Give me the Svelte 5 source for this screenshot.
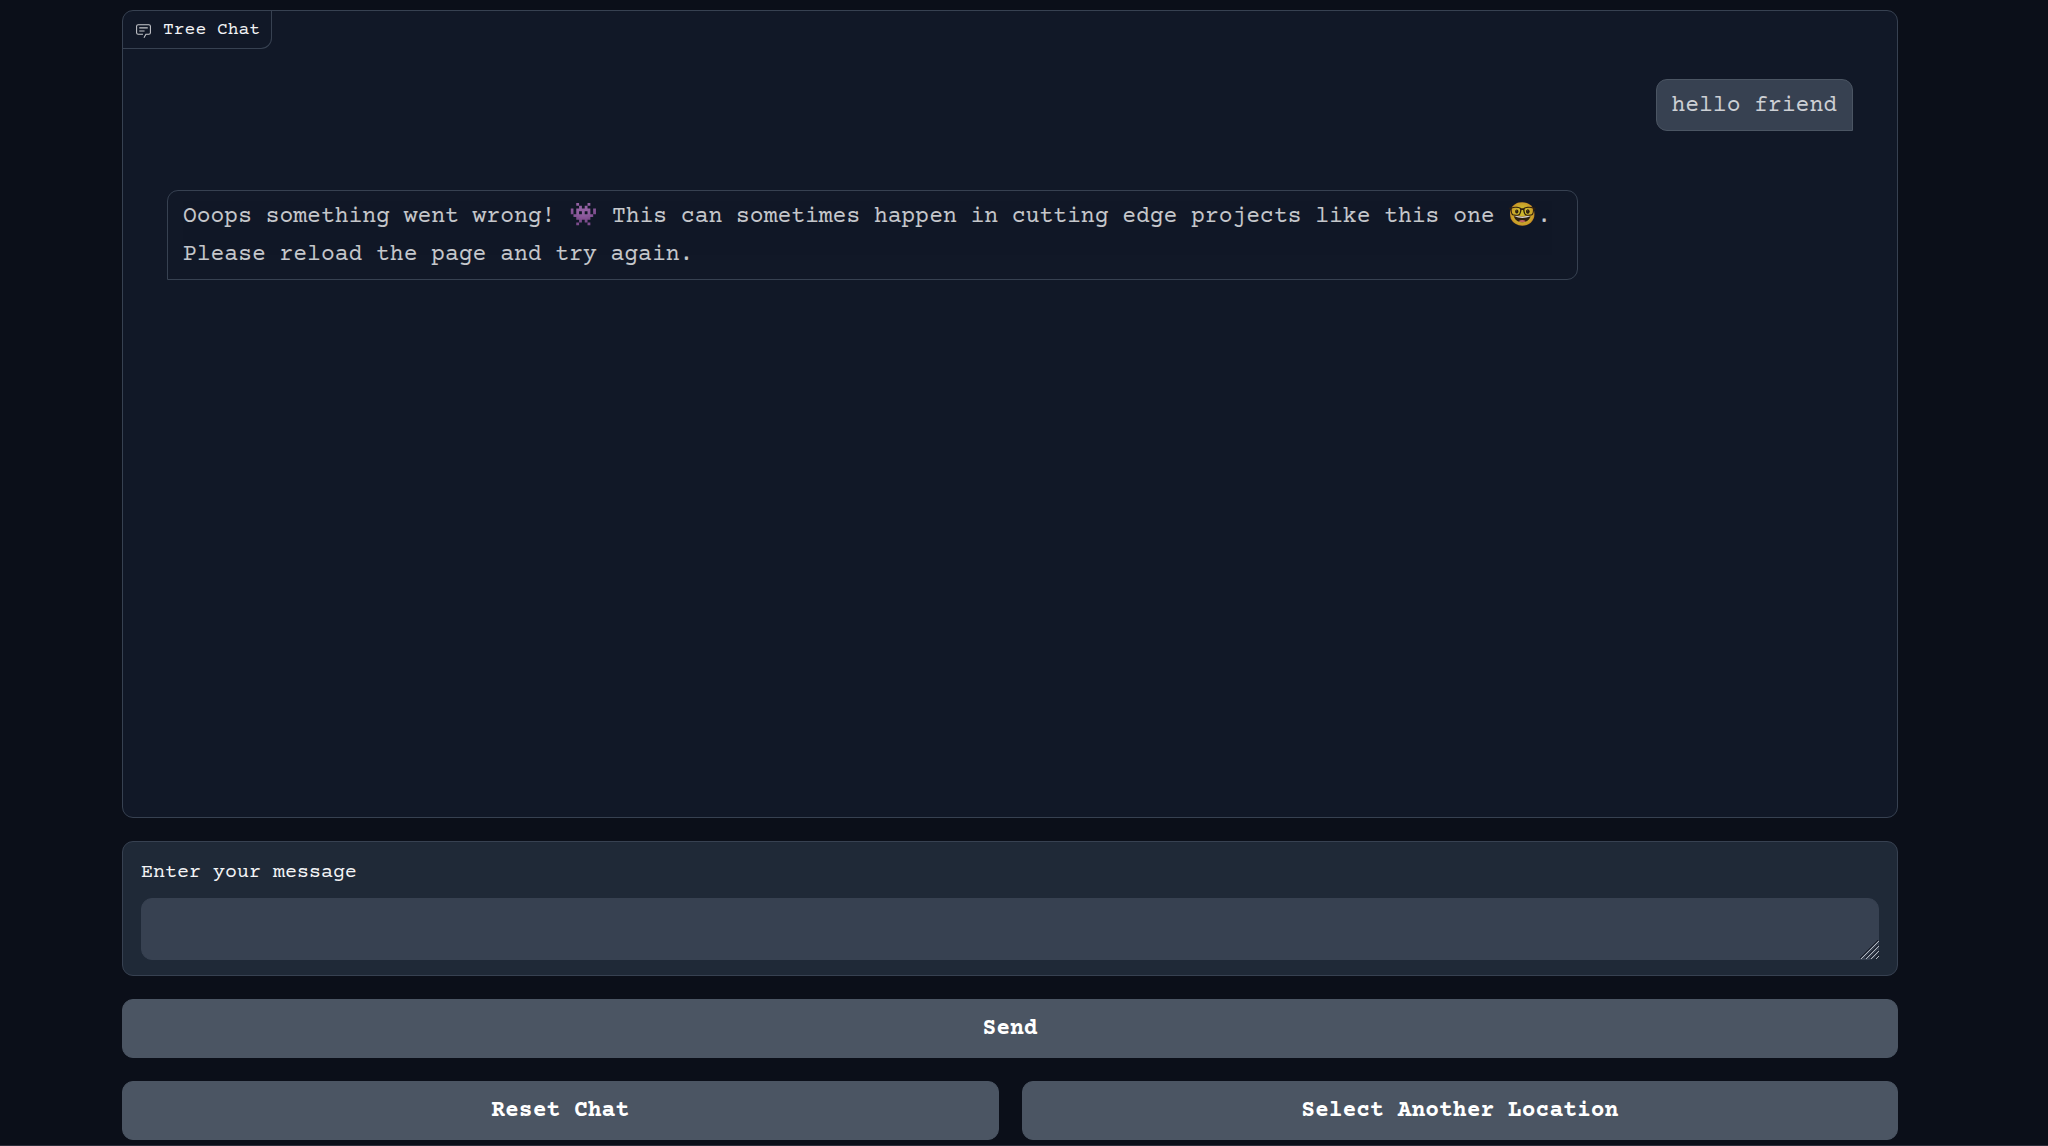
<script lang="ts">
  let message = '';
  let messages = [
    { role: 'user', text: 'hello friend' },
    {
      role: 'bot',
      text: 'Ooops something went wrong! 👾 This can sometimes happen in cutting edge projects like this one 🤓. Please reload the page and try again.'
    }
  ];

  function send() {
    if (!message.trim()) return;
    messages = [...messages, { role: 'user', text: message }];
    message = '';
  }

  function reset() {
    messages = [];
  }
</script>

<main class="page">
  <section class="chat" aria-label="Tree Chat">
    <div class="chat-label">
      <svg class="chat-icon" viewBox="0 0 32 32" aria-hidden="true">
        <path d="M17.74 30L16 29l4-7h6a2 2 0 0 0 2-2V8a2 2 0 0 0-2-2H6a2 2 0 0 0-2 2v12a2 2 0 0 0 2 2h9v2H6a4 4 0 0 1-4-4V8a4 4 0 0 1 4-4h20a4 4 0 0 1 4 4v12a4 4 0 0 1-4 4h-4.84Z" />
        <path d="M8 10h16v2H8zm0 6h10v2H8z" />
      </svg>
      <span>Tree Chat</span>
    </div>

    <div class="messages">
      {#each messages as item}
        <div class="message {item.role}"><span class="message-text">{item.text}</span></div>
      {/each}
    </div>
  </section>

  <div class="block">
    <label for="message">Enter your message</label>
    <div class="field">
      <textarea id="message" rows="1" bind:value={message}></textarea>
      <svg class="grip" viewBox="0 0 19 19" aria-hidden="true">
        <path class="grip-dark" d="M0 18L18 0M5 18L18 5M10 18L18 10M15 18L18 15" />
        <path class="grip-light" d="M1 19L19 1M6 19L19 6M11 19L19 11M16 19L19 16" />
      </svg>
    </div>
  </div>

  <button type="button" on:click={send}>Send</button>

  <div class="row">
    <button type="button" on:click={reset}>Reset Chat</button>
    <button type="button">Select Another Location</button>
  </div>
</main>

<style>
  :global(body) {
    margin: 0;
    background: #0b0f19;
  }

  .page {
    box-sizing: border-box;
    min-height: 100vh;
    padding: 10px 150px 5px 122px;
    display: flex;
    flex-direction: column;
    gap: 23px;
    border-bottom: 1px solid #2b2d3a;
    color: #f3f4f6;
    font-family: "Courier Prime", "Liberation Mono", monospace;
  }

  .chat {
    flex: 1;
    display: flex;
    flex-direction: column;
    align-items: flex-start;
    border: 1px solid #374151;
    border-radius: 11px;
    background: #111827;
    overflow: hidden;
  }

  .chat-label {
    display: flex;
    align-items: center;
    gap: 11px;
    padding: 7px 11px 5px 12px;
    border-right: 1px solid #374151;
    border-bottom: 1px solid #374151;
    border-bottom-right-radius: 11px;
    font-size: 18px;
    line-height: 25px;
  }

  .chat-icon {
    width: 17px;
    height: 17px;
    fill: #f3f4f6;
    opacity: 0.8;
  }

  .messages {
    box-sizing: border-box;
    width: 100%;
    padding: 30px 44px;
    display: flex;
    flex-direction: column;
    gap: 59px;
  }

  .message {
    padding: 7px 15px 5px;
    border: 1px solid #374151;
    border-radius: 11px;
    font-size: 23px;
    line-height: 38px;
  }

  .message-text {
    opacity: 0.8;
  }

  .user {
    align-self: flex-end;
    border-color: #4b5563;
    border-bottom-right-radius: 0;
    background: #374151;
  }

  .bot {
    align-self: flex-start;
    margin-right: 275px;
    border-bottom-left-radius: 0;
  }

  .block {
    padding: 16px 18px 15px;
    display: flex;
    flex-direction: column;
    gap: 10px;
    border: 1px solid #374151;
    border-radius: 11px;
    background: #1f2937;
  }

  label {
    font-size: 20px;
    line-height: 30px;
  }

  .field {
    position: relative;
    display: flex;
  }

  textarea {
    box-sizing: border-box;
    width: 100%;
    height: 62px;
    padding: 12px 15px;
    border: 1px solid #374151;
    border-radius: 11px;
    background: #374151;
    color: #f3f4f6;
    font: inherit;
    font-size: 23px;
    line-height: 36px;
    resize: none;
  }

  .grip {
    position: absolute;
    right: 0;
    bottom: 1px;
    width: 19px;
    height: 19px;
    fill: none;
    pointer-events: none;
  }

  .grip-dark {
    stroke: #171b26;
  }

  .grip-light {
    stroke: #b4b8bf;
  }

  .row {
    display: flex;
    gap: 23px;
  }

  button {
    flex: 1 1 0;
    padding: 12px 23px 10px;
    border: 1px solid #4b5563;
    border-radius: 11px;
    background: #4b5563;
    color: #ffffff;
    font-family: inherit;
    font-size: 23px;
    font-weight: 700;
    line-height: 35px;
    cursor: pointer;
  }

  .page > button {
    flex: none;
  }
</style>
